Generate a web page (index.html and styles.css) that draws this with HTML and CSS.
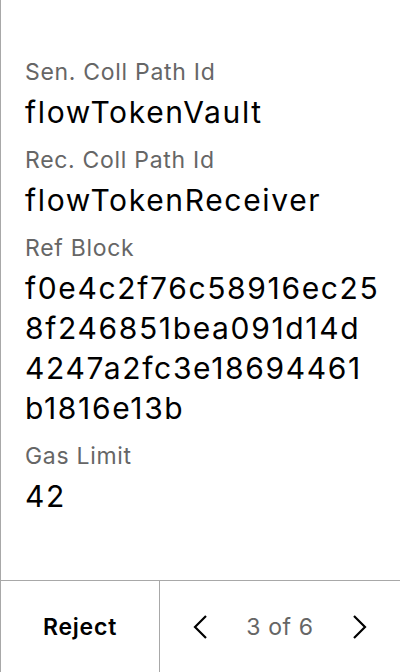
FILE: index.html
```html
<!DOCTYPE html>
<html>
<head>
<meta charset="utf-8">
<link rel="stylesheet" href="styles.css">
</head>
<body>
<div class="screen">
  <main class="details">
    <div class="field">
      <div class="label">Sen. Coll Path Id</div>
      <div class="value">flowTokenVault</div>
    </div>
    <div class="field">
      <div class="label">Rec. Coll Path Id</div>
      <div class="value">flowTokenReceiver</div>
    </div>
    <div class="field">
      <div class="label">Ref Block</div>
      <div class="value">f0e4c2f76c58916ec25<br>8f246851bea091d14d<br>4247a2fc3e18694461<br>b1816e13b</div>
    </div>
    <div class="field">
      <div class="label">Gas Limit</div>
      <div class="value">42</div>
    </div>
  </main>
  <footer class="footer">
    <div class="reject">Reject</div>
    <div class="pager">
      <div class="nav">
        <svg width="16" height="24" viewBox="0 0 16 24"><path d="M14 1 L3 12 L14 23" fill="none" stroke="#000" stroke-width="2.2"/></svg>
      </div>
      <div class="count">3 of 6</div>
      <div class="nav">
        <svg width="16" height="24" viewBox="0 0 16 24"><path d="M2 1 L13 12 L2 23" fill="none" stroke="#000" stroke-width="2.2"/></svg>
      </div>
    </div>
  </footer>
</div>
</body>
</html>
```
FILE: styles.css
```css
html, body {
  margin: 0;
  padding: 0;
  background: #fff;
}
body {
  font-family: Inter, "Noto Sans", sans-serif;
  color: #000;
}
.screen {
  width: 400px;
  height: 672px;
  box-sizing: border-box;
  border-left: 1px solid #a8a8a8;
  display: flex;
  flex-direction: column;
}
.details {
  flex: 1;
  padding: 56px 0 0 24px;
  display: flex;
  flex-direction: column;
  gap: 12px;
}
.label {
  font-size: 23px;
  line-height: 32px;
  color: #666;
  letter-spacing: 0.7px;
  margin-bottom: 4px;
}
.value {
  font-size: 30px;
  line-height: 40px;
  letter-spacing: 1.65px;
  color: #000;
}
.footer {
  height: 92px;
  box-sizing: border-box;
  border-top: 1px solid #a8a8a8;
  display: flex;
}
.reject {
  width: 159px;
  border-right: 1px solid #a8a8a8;
  display: flex;
  align-items: center;
  justify-content: center;
  font-size: 23px;
  font-weight: 600;
  letter-spacing: 0.8px;
}
.pager {
  flex: 1;
  display: grid;
  grid-template-columns: 80px 80px 80px;
  align-items: center;
}
.nav {
  display: flex;
  justify-content: center;
  align-items: center;
}
.nav svg {
  display: block;
}
.count {
  text-align: center;
  font-size: 23px;
  letter-spacing: 0.6px;
  color: #666;
}
```
